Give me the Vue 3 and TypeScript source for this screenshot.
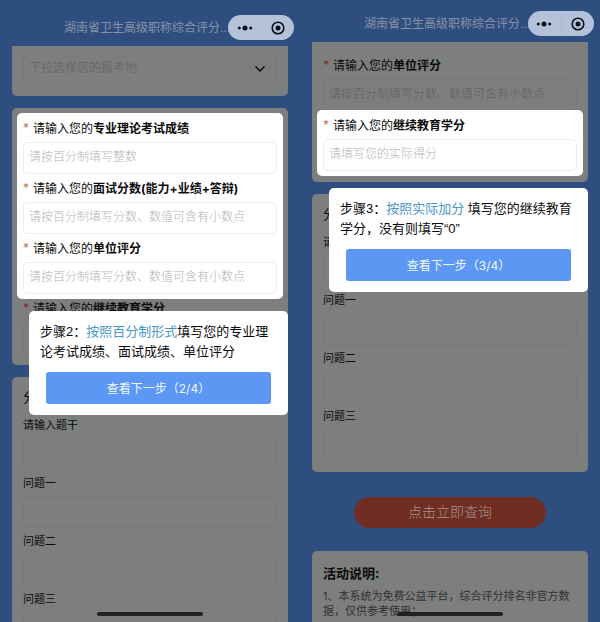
<script setup lang="ts">
import { ref } from 'vue'

interface Field {
  id: string
  prefix: string
  strong: string
  placeholder: string
}

const scoreFields: Field[] = [
  { id: 'theory', prefix: '请输入您的', strong: '专业理论考试成绩', placeholder: '请按百分制填写整数' },
  { id: 'interview', prefix: '请输入您的', strong: '面试分数(能力+业绩+答辩)', placeholder: '请按百分制填写分数、数值可含有小数点' },
  { id: 'unit', prefix: '请输入您的', strong: '单位评分', placeholder: '请按百分制填写分数、数值可含有小数点' },
]
const creditField: Field = {
  id: 'credit',
  prefix: '请输入您的',
  strong: '继续教育学分',
  placeholder: '请填写您的实际得分',
}
const questions: string[] = ['请输入题干', '问题一', '问题二', '问题三']

const region = ref('')
</script>

<template>
  <main class="screens">
    <section class="phone">
      <header class="bar bar-tall">
        <h1 class="bar-title">湖南省卫生高级职称综合评分...</h1>
        <div class="capsule">
          <button class="cap-btn" type="button" aria-label="更多">
            <svg width="16" height="8" viewBox="0 0 16 8"><circle cx="2.3" cy="4" r="1.5" /><circle cx="8" cy="4" r="2.5" /><circle cx="13.7" cy="4" r="1.5" /></svg>
          </button>
          <button class="cap-btn" type="button" aria-label="关闭">
            <svg width="14" height="14" viewBox="0 0 14 14"><circle cx="7" cy="7" r="5.8" fill="none" stroke="#0b0f16" stroke-width="1.6" /><circle cx="7" cy="7" r="2.5" /></svg>
          </button>
        </div>
      </header>

      <div class="view">
        <div class="card card-region">
          <div class="select-wrap">
            <select v-model="region" class="control" aria-label="报考地">
              <option value="">下拉选择您的报考地</option>
            </select>
            <svg class="chevron" width="12" height="8" viewBox="0 0 12 8"><path d="M1.5 1.5 6 6l4.5-4.5" fill="none" stroke="#0c0c0c" stroke-width="1.5" /></svg>
          </div>
        </div>

        <div class="card">
          <div class="spotlight">
            <div v-for="f in scoreFields" :key="f.id" class="field">
              <label class="label" :for="'a-' + f.id"><span class="star">*</span>{{ f.prefix }}<b>{{ f.strong }}</b></label>
              <input :id="'a-' + f.id" class="control" type="text" :placeholder="f.placeholder" />
            </div>
            <aside class="tip">
              <p class="tip-text">步骤2：<em>按照百分制形式</em>填写您的专业理论考试成绩、面试成绩、单位评分</p>
              <button class="tip-btn" type="button">查看下一步（2/4）</button>
            </aside>
          </div>
          <div class="field">
            <label class="label" for="a-credit"><span class="star">*</span>{{ creditField.prefix }}<b>{{ creditField.strong }}</b></label>
            <input id="a-credit" class="control" type="text" />
          </div>
        </div>

        <div class="card">
          <h2 class="group-title">分</h2>
          <div v-for="(q, i) in questions" :key="q" class="question">
            <label class="q-label" :for="'a-q' + i">{{ q }}</label>
            <input :id="'a-q' + i" class="control" type="text" />
          </div>
        </div>
      </div>
      <div class="home"></div>
    </section>

    <section class="phone">
      <header class="bar">
        <h1 class="bar-title">湖南省卫生高级职称综合评分...</h1>
        <div class="capsule divided">
          <button class="cap-btn" type="button" aria-label="更多">
            <svg width="16" height="8" viewBox="0 0 16 8"><circle cx="2.3" cy="4" r="1.5" /><circle cx="8" cy="4" r="2.5" /><circle cx="13.7" cy="4" r="1.5" /></svg>
          </button>
          <button class="cap-btn" type="button" aria-label="关闭">
            <svg width="14" height="14" viewBox="0 0 14 14"><circle cx="7" cy="7" r="5.8" fill="none" stroke="#0b0f16" stroke-width="1.6" /><circle cx="7" cy="7" r="2.5" /></svg>
          </button>
        </div>
      </header>

      <div class="view">
        <div class="card card-scrolled">
          <input class="control" type="text" aria-label="面试分数" />
          <div class="field">
            <label class="label" for="b-unit"><span class="star">*</span>{{ scoreFields[2].prefix }}<b>{{ scoreFields[2].strong }}</b></label>
            <input id="b-unit" class="control" type="text" :placeholder="scoreFields[2].placeholder" />
          </div>
          <div class="spotlight">
            <div class="field">
              <label class="label" for="b-credit"><span class="star">*</span>{{ creditField.prefix }}<b>{{ creditField.strong }}</b></label>
              <input id="b-credit" class="control" type="text" :placeholder="creditField.placeholder" />
            </div>
            <aside class="tip">
              <p class="tip-text">步骤3：<em>按照实际加分</em> 填写您的继续教育学分，没有则填写“0”</p>
              <button class="tip-btn" type="button">查看下一步（3/4）</button>
            </aside>
          </div>
        </div>

        <div class="card">
          <h2 class="group-title">分</h2>
          <div v-for="(q, i) in questions" :key="q" class="question">
            <label class="q-label" :for="'b-q' + i">{{ q }}</label>
            <input :id="'b-q' + i" class="control" type="text" />
          </div>
        </div>

        <button class="submit" type="button">点击立即查询</button>

        <div class="card">
          <h2 class="notes-title">活动说明:</h2>
          <p class="notes">1、本系统为免费公益平台，综合评分排名非官方数据，仅供参考使用；</p>
        </div>
      </div>
      <div class="home"></div>
    </section>
  </main>
</template>

<style>
body {
  margin: 0;
  background: #2f4e80;
}
</style>

<style scoped>
* {
  box-sizing: border-box;
}

.screens {
  display: grid;
  grid-template-columns: 1fr 1fr;
  height: 100vh;
  overflow: hidden;
  font-family: Inter, 'Noto Sans CJK SC', sans-serif;
  font-size: 12px;
  color: #0b0b0b;
}

h1,
h2,
p {
  margin: 0;
}

button,
input,
select {
  font-family: inherit;
}

.phone {
  position: relative;
  display: flex;
  flex-direction: column;
  min-width: 0;
  height: 100vh;
  overflow: hidden;
  background: #2f4e80;
}

.bar {
  display: flex;
  flex: none;
  align-items: flex-end;
  height: 42px;
  padding: 0 6px 6px 64px;
}

.bar-tall {
  height: 46px;
}

.bar-title {
  flex: 1;
  min-width: 0;
  font-size: 12px;
  font-weight: 400;
  line-height: 25px;
  white-space: nowrap;
  color: #8793a5;
}

.capsule {
  position: relative;
  display: flex;
  flex: none;
  width: 66px;
  height: 25px;
  border-radius: 13px;
  background: #b4c2d9;
}

.cap-btn {
  display: flex;
  flex: 1;
  align-items: center;
  justify-content: center;
  padding: 0;
  border: 0;
  background: none;
  fill: #0b0f16;
}

.divided .cap-btn + .cap-btn {
  border-left: 1px solid #acbad0;
}

.view {
  flex: 1;
  min-height: 0;
  overflow: hidden;
}

.card {
  margin: 0 12px 12px;
  padding: 6px 11px 11px;
  border-radius: 5px;
  background: #7d7e7e;
}

.card-region {
  padding-top: 7px;
  border-top-left-radius: 0;
  border-top-right-radius: 0;
}

.card-scrolled {
  margin-top: -29px;
}

.control {
  display: block;
  width: 100%;
  height: 32px;
  padding: 0 5px 3px;
  border: 1px solid #777878;
  border-radius: 5px;
  outline: none;
  background: transparent;
  font-size: 12px;
  font-weight: 300;
  color: #5f6060;
  appearance: none;
}

.control::placeholder {
  color: #606161;
  opacity: 1;
}

.select-wrap {
  display: grid;
  align-items: center;
}

.select-wrap > * {
  grid-area: 1 / 1;
}

.chevron {
  justify-self: end;
  margin-right: 11px;
  pointer-events: none;
}

.label {
  display: flex;
  align-items: center;
  height: 28px;
  padding-bottom: 2px;
  white-space: nowrap;
}

.label b {
  font-weight: 700;
}

.star {
  width: 10px;
  color: #7a2c24;
}

.spotlight {
  position: relative;
  z-index: 2;
  margin: -1px -6px -5px;
  padding: 1px 6px 5px;
  border-radius: 5px;
  background: #fff;
}

.spotlight .control {
  border-color: #ececec;
}

.spotlight .control::placeholder {
  color: #b4b4b4;
}

.spotlight .star {
  color: #d0705f;
}

.tip {
  position: absolute;
  top: calc(100% + 12px);
  right: -5px;
  left: 12px;
  padding: 11px;
  border-radius: 5px;
  background: #fff;
}

.tip-text {
  font-family: 'Liberation Sans', 'Noto Sans CJK SC', sans-serif;
  font-size: 13px;
  line-height: 20px;
}

.tip-text em {
  font-style: normal;
  color: #4a97c9;
}

.tip-btn {
  display: block;
  width: calc(100% - 12px);
  height: 32px;
  margin: 10px 6px 0;
  padding: 0 0 2px;
  border: 0;
  border-radius: 3px;
  background: #5b97f3;
  font-size: 12px;
  color: #f2f7ff;
}

.group-title {
  height: 29px;
  font-size: 13px;
  font-weight: 400;
  line-height: 29px;
}

.q-label {
  display: block;
  height: 26px;
  font-size: 11px;
  line-height: 26px;
}

.submit {
  display: block;
  width: 64%;
  height: 31px;
  margin: 25px auto 23px;
  padding: 0 0 3px;
  border: 0;
  border-radius: 16px;
  background: #702d23;
  font-size: 14px;
  font-weight: 300;
  color: #a8958f;
}

.notes-title {
  padding: 6px 0;
  font-size: 13px;
  font-weight: 700;
  line-height: 20px;
}

.notes {
  font-size: 11px;
  line-height: 15px;
  color: #303131;
}

.home {
  position: absolute;
  bottom: 6px;
  left: 50%;
  z-index: 3;
  width: 106px;
  height: 4px;
  margin-left: -53px;
  border-radius: 2px;
  background: #202121;
}
</style>
